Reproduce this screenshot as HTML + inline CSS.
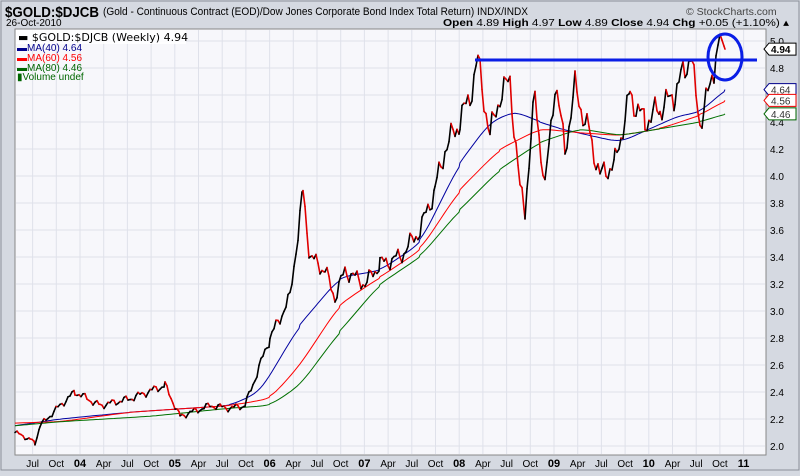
<!DOCTYPE html><html><head><style>
body{margin:0;width:800px;height:471px;overflow:hidden;background:#d5d9e1;font-family:"Liberation Sans",sans-serif}
</style></head><body>
<svg width="800" height="471" xmlns="http://www.w3.org/2000/svg" font-family="Liberation Sans, sans-serif">
<rect x="0" y="0" width="800" height="471" fill="#d5d9e1"/>
<rect x="1" y="1" width="798" height="469" fill="none" stroke="#8a8f99"/>
<text x="5" y="17" font-size="15" font-weight="bold" fill="#000" textLength="94" lengthAdjust="spacingAndGlyphs">$GOLD:$DJCB</text>
<text x="103" y="15" font-size="11" fill="#000" textLength="425" lengthAdjust="spacingAndGlyphs">(Gold - Continuous Contract (EOD)/Dow Jones Corporate Bond Index Total Return)  INDX/INDX</text>
<text x="686" y="15" font-size="10.5" fill="#444">© StockCharts.com</text>
<text x="6" y="26" font-size="10" fill="#000">26-Oct-2010</text>
<text x="443" y="26" font-size="10.5" fill="#000" textLength="346" lengthAdjust="spacingAndGlyphs"><tspan font-weight="bold">Open</tspan> 4.89 <tspan font-weight="bold">High</tspan> 4.97 <tspan font-weight="bold">Low</tspan> 4.89 <tspan font-weight="bold">Close</tspan> 4.94 <tspan font-weight="bold">Chg</tspan> +0.05 (+1.10%) ▴</text>
<rect x="15" y="29" width="751" height="426" fill="#f7f7fb" stroke="#888"/>
<g id="grid" stroke="#dfe1ea" stroke-width="1"></g>
<g id="lines"></g>
<rect x="16" y="30" width="170" height="14" fill="#fff" opacity="0.85"/>
<text x="18" y="41" font-size="11" fill="#000" font-family="DejaVu Sans, sans-serif">▬ $GOLD:$DJCB (Weekly) 4.94</text>
<g font-size="10">
<text x="17" y="51" fill="#00008b">▬MA(40) 4.64</text>
<text x="17" y="61" fill="#f00">▬MA(60) 4.56</text>
<text x="17" y="71" fill="#060">▬MA(80) 4.46</text>
<text x="17" y="80" fill="#060">▮Volume undef</text>
</g>
<g id="axis" font-size="10" fill="#000"></g>
<line x1="475" y1="60" x2="757" y2="60" stroke="#0a1ee6" stroke-width="3"/>
<ellipse cx="725" cy="57" rx="17" ry="23" fill="none" stroke="#0a1ee6" stroke-width="3"/>
</svg>
<script>
const NS="http://www.w3.org/2000/svg";
const Y=v=>446-(v-2)*135;
const grid=document.getElementById('grid'),axis=document.getElementById('axis'),L=document.getElementById('lines');
function el(t,a,p){const e=document.createElementNS(NS,t);for(const k in a)e.setAttribute(k,a[k]);p.appendChild(e);return e}
for(let v=2.0;v<=5.01;v+=0.2){const y=Y(v);el('line',{x1:16,x2:765,y1:y,y2:y},grid);
 const t=el('text',{x:770,y:y+4},axis);t.textContent=v.toFixed(1);}
const yrs=['04','05','06','07','08','09','10','11'];
for(let q=-2;q<=28;q++){const x=80+q*23.7;if(x<20||x>760)continue;
 el('line',{x1:x,x2:x,y1:30,y2:454},grid);
 const m=((q%4)+4)%4;const txt=m==0?yrs[Math.floor(q/4)]:['','Apr','Jul','Oct'][m];
 const t=el('text',{x:x,y:467,'text-anchor':'middle','font-weight':m==0?'bold':'normal','font-size':m==0?11:10},axis);t.textContent=txt;}
function interp(pts,step){const out=[];for(let i=0;i<pts.length-1;i++){const[a,b]=[pts[i],pts[i+1]];for(let x=a[0];x<b[0];x+=step){out.push([x,a[1]+(b[1]-a[1])*(x-a[0])/(b[0]-a[0])]);}}out.push(pts[pts.length-1]);return out}
function smooth(pts,n){let p=pts;for(let k=0;k<n;k++){p=p.map((q,i)=>i==0||i==p.length-1?q:[q[0],(p[i-1][1]+2*q[1]+p[i+1][1])/4]);}return p}
function poly(pts,col,w){el('polyline',{points:pts.map(p=>p[0].toFixed(1)+','+Y(p[1]).toFixed(1)).join(' '),fill:'none',stroke:col,'stroke-width':w},L)}
poly(smooth(interp([[15,2.15],[60,2.2],[130,2.25],[230,2.3],[260,2.4],[300,2.9],[340,3.25],[380,3.3],[420,3.5],[460,4.1],[490,4.4],[515,4.48],[540,4.4],[560,4.35],[590,4.3],[620,4.25],[650,4.35],[680,4.45],[700,4.47],[725,4.64]],3),12),'#0000a0',1);
poly(smooth(interp([[15,2.17],[60,2.18],[130,2.25],[230,2.3],[270,2.35],[300,2.6],[340,3.05],[380,3.25],[420,3.45],[460,3.9],[500,4.2],[540,4.35],[580,4.32],[620,4.3],[660,4.35],[700,4.45],[725,4.56]],3),12),'#ff0000',1);
poly(smooth(interp([[15,2.15],[60,2.18],[150,2.22],[230,2.28],[270,2.3],[300,2.45],[340,2.85],[380,3.2],[420,3.4],[460,3.75],[500,4.05],[540,4.25],[580,4.35],[620,4.3],[660,4.35],[700,4.4],[725,4.46]],3),12),'#007000',1);
const key=[[15,2.1],[30,2.05],[35,2.02],[40,2.15],[60,2.3],[75,2.4],[100,2.3],[130,2.35],[165,2.45],[180,2.22],[210,2.3],[230,2.28],[245,2.3],[255,2.5],[270,2.8],[290,3.1],[303,3.88],[310,3.4],[325,3.3],[335,3.1],[345,3.3],[365,3.2],[380,3.35],[400,3.4],[420,3.6],[435,3.9],[445,4.2],[460,4.4],[470,4.6],[478,4.85],[490,4.3],[500,4.6],[510,4.7],[520,3.9],[525,3.75],[535,4.6],[545,3.9],[555,4.7],[565,4.2],[575,4.65],[590,4.3],[600,4.0],[615,4.1],[630,4.6],[645,4.4],[660,4.5],[675,4.6],[690,4.9],[700,4.4],[710,4.65],[720,5.05],[725,4.94]];
const p=interp(key,2);
for(let i=0;i<p.length;i++){if(i>0&&i<p.length-1&&p[i][0]<716)p[i][1]+=(Math.sin(i*0.9)*0.6+Math.sin(i*2.1)*0.4)*0.05*(p[i][1]-1.6)/1.2;}
for(let i=0;i<p.length-1;i++){const up=p[i+1][1]>=p[i][1];
 el('line',{x1:p[i][0],y1:Y(p[i][1]),x2:p[i+1][0],y2:Y(p[i+1][1]),stroke:up?'#000':'#e00000','stroke-width':1.6,'stroke-linecap':'round'},L);}
[[4.94,'#000'],[4.64,'#00008b'],[4.56,'#e00'],[4.46,'#060']].forEach(([v,c])=>{const y=Y(v);
 el('path',{d:`M764 ${y} L769 ${y-6} H796 V${y+6} H769 Z`,fill:'#fff',stroke:c},axis);
 const t=el('text',{x:771,y:y+4,fill:v==4.94?'#000':'#333','font-weight':v==4.94?'bold':'normal'},axis);t.textContent=v.toFixed(2);});
</script>
</body></html>
